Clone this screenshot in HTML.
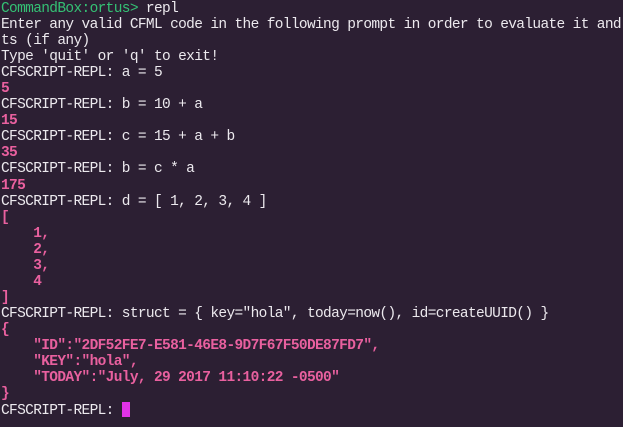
<!DOCTYPE html>
<html><head><meta charset="utf-8"><style>
html,body{margin:0;padding:0;background:#2c1f33;width:623px;height:427px;overflow:hidden}
pre{margin:0;padding:1px 0 0 1px;font-family:"Liberation Mono",monospace;font-size:14.5px;line-height:16.04px;color:#ece9ee;white-space:pre;letter-spacing:-0.65px}
.g{color:#34c074}
.p{color:#e9609f;font-weight:bold}
.c{display:inline-block;width:8px;height:15px;background:#e033e8;vertical-align:-3px}
</style></head><body><pre><span class="g">CommandBox:ortus&gt;</span> repl
Enter any valid CFML code in the following prompt in order to evaluate it and
ts (if any)
Type 'quit' or 'q' to exit!
CFSCRIPT-REPL: a = 5
<span class="p">5</span>
CFSCRIPT-REPL: b = 10 + a
<span class="p">15</span>
CFSCRIPT-REPL: c = 15 + a + b
<span class="p">35</span>
CFSCRIPT-REPL: b = c * a
<span class="p">175</span>
CFSCRIPT-REPL: d = [ 1, 2, 3, 4 ]
<span class="p">[
    1,
    2,
    3,
    4
]</span>
CFSCRIPT-REPL: struct = { key="hola", today=now(), id=createUUID() }
<span class="p">{
    "ID":"2DF52FE7-E581-46E8-9D7F67F50DE87FD7",
    "KEY":"hola",
    "TODAY":"July, 29 2017 11:10:22 -0500"
}</span>
CFSCRIPT-REPL: <span class="c"></span></pre></body></html>
